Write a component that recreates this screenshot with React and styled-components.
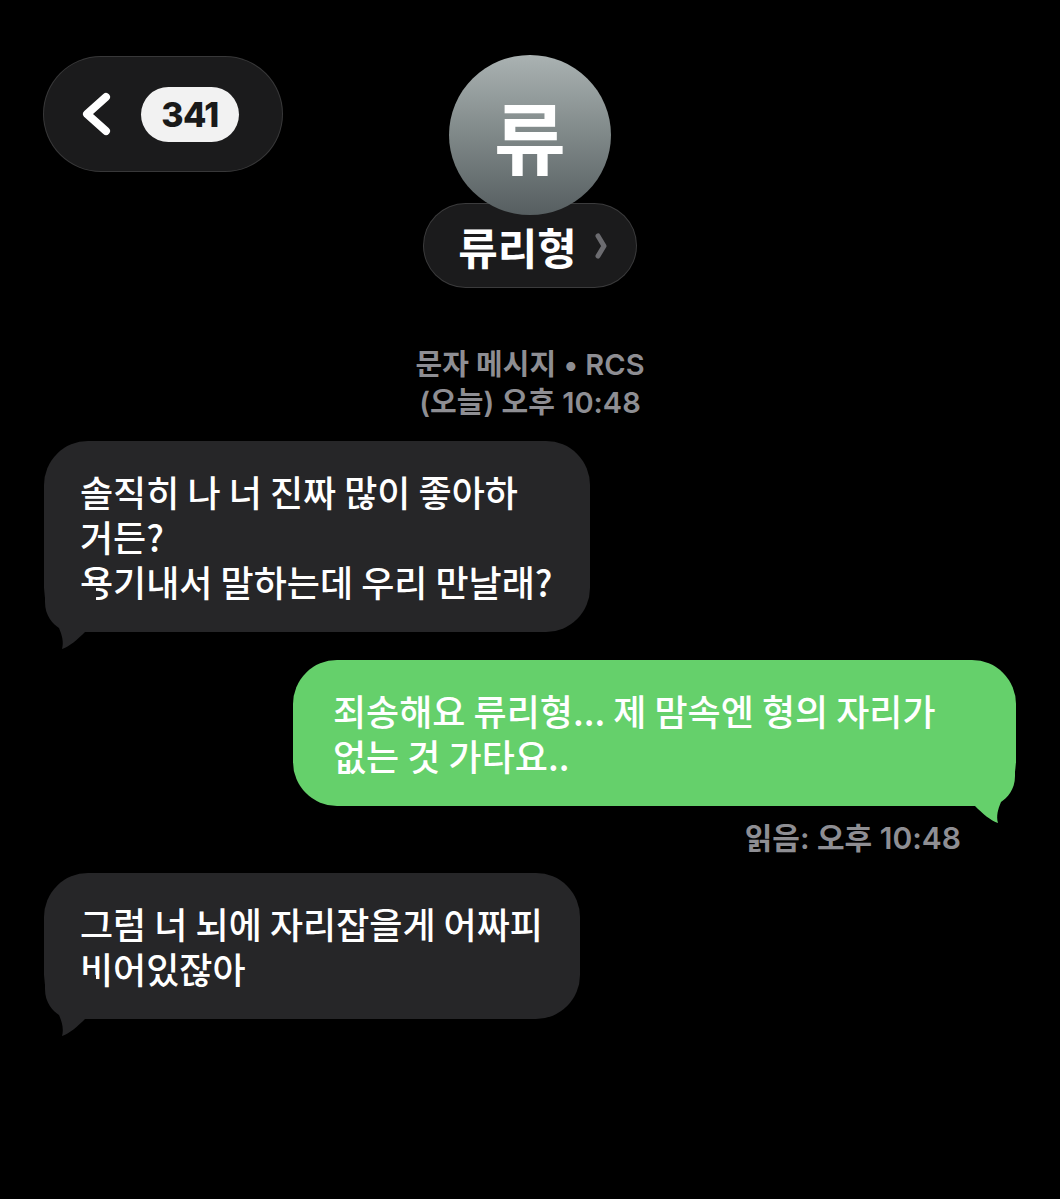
import React from "react";
import styled, { createGlobalStyle } from "styled-components";

const GlobalStyle = createGlobalStyle`
  html, body {
    margin: 0;
    padding: 0;
    background: #000;
  }
  body {
    font-family: "Inter", "Noto Sans CJK KR", sans-serif;
    color: #fff;
  }
`;

const Page = styled.div`
  width: 1060px;
  min-height: 1199px;
  box-sizing: border-box;
  padding: 55px 44px 0;
  background: #000;
`;

const Header = styled.header`
  display: grid;
  grid-template-columns: 1fr auto 1fr;
  align-items: start;
`;

const BackPill = styled.div`
  justify-self: start;
  margin: 1px 0 0 -1px;
  width: 240px;
  height: 116px;
  box-sizing: border-box;
  display: flex;
  align-items: center;
  gap: 30px;
  padding-left: 37px;
  border-radius: 58px;
  background: #1b1b1c;
  border: 1.5px solid rgba(255, 255, 255, 0.13);
`;

const CountBadge = styled.span`
  display: flex;
  align-items: center;
  justify-content: center;
  width: 98px;
  height: 55px;
  border-radius: 28px;
  background: #f2f2f2;
  color: #1a1a1a;
  font-family: "Inter", sans-serif;
  font-size: 34px;
  font-weight: 800;
  letter-spacing: -0.5px;
`;

const Contact = styled.div`
  display: flex;
  flex-direction: column;
  align-items: center;
`;

const Avatar = styled.div`
  position: relative;
  z-index: 1;
  width: 162px;
  height: 160px;
  border-radius: 50%;
  display: flex;
  align-items: center;
  justify-content: center;
  background: linear-gradient(180deg, #aab2b2 0%, #7f8888 50%, #565e60 100%);
  color: #fff;
  font-family: "Noto Sans CJK KR", sans-serif;
  font-size: 78px;
  font-weight: 700;
  line-height: 1;
`;

const NamePill = styled.div`
  margin-top: -12px;
  height: 85px;
  box-sizing: border-box;
  display: flex;
  align-items: center;
  gap: 17px;
  padding: 0 28px 0 34px;
  border-radius: 43px;
  background: #1b1b1c;
  border: 1.5px solid rgba(255, 255, 255, 0.14);
`;

const Name = styled.span`
  font-family: "Noto Sans CJK KR", sans-serif;
  font-size: 43px;
  font-weight: 700;
  color: #fff;
  line-height: 1;
  padding-top: 2px;
`;

const Meta = styled.div`
  margin-top: 58px;
  text-align: center;
  color: #8e8e93;
  font-size: 29px;
  font-weight: 600;
  line-height: 38px;
`;

const Thread = styled.div`
  display: flex;
  flex-direction: column;
  margin-top: 19px;
`;

const Bubble = styled.div`
  position: relative;
  align-self: ${(p) => (p.$out ? "flex-end" : "flex-start")};
  width: ${(p) => (p.$width ? `${p.$width}px` : "auto")};
  box-sizing: border-box;
  margin-top: ${(p) => p.$gap || 0}px;
  padding: 28px 37px 28px ${(p) => (p.$out ? 40 : 36)}px;
  border-radius: 44px;
  background: ${(p) => (p.$out ? "#65d06b" : "#262628")};
  color: #fff;
  font-family: "Noto Sans CJK KR", sans-serif;
  font-size: 36px;
  font-weight: 500;
  line-height: 45px;
  white-space: pre-line;
`;

const Tail = styled.svg`
  position: absolute;
  bottom: -18px;
  ${(p) => (p.$out ? "right: 0; transform: scaleX(-1);" : "left: 0;")}
`;

const Receipt = styled.div`
  align-self: flex-end;
  margin: 13px 55px 0 0;
  color: #8e8e93;
  font-size: 30px;
  font-weight: 600;
  line-height: 38px;
`;

const BubbleTail = ({ out, color }) => (
  <Tail $out={out} width="52" height="62" viewBox="0 0 52 62">
    <path
      d="M1 0 L1 14 C1 28 9 36 15 40 C18 47 20 54 18 61 C25 59 34 51 41 44 L52 44 L52 0 Z"
      fill={color}
    />
  </Tail>
);

const Message = ({ out, width, gap, children }) => (
  <Bubble $out={out} $width={width} $gap={gap}>
    {children}
    <BubbleTail out={out} color={out ? "#65d06b" : "#262628"} />
  </Bubble>
);

export default function App() {
  return (
    <Page>
      <GlobalStyle />
      <Header>
        <BackPill>
          <svg width="30" height="44" viewBox="0 0 30 44">
            <polyline
              points="25,5 6,22 25,39"
              fill="none"
              stroke="#fff"
              strokeWidth="8"
              strokeLinecap="round"
              strokeLinejoin="round"
            />
          </svg>
          <CountBadge>341</CountBadge>
        </BackPill>
        <Contact>
          <Avatar>류</Avatar>
          <NamePill>
            <Name>류리형</Name>
            <svg width="14" height="28" viewBox="0 0 14 28">
              <polyline
                points="4,4 10,14 4,24"
                fill="none"
                stroke="#6c6c70"
                strokeWidth="5"
                strokeLinecap="round"
                strokeLinejoin="round"
              />
            </svg>
          </NamePill>
        </Contact>
        <div />
      </Header>

      <Meta>
        문자 메시지 • RCS
        <br />
        (오늘) 오후 10:48
      </Meta>

      <Thread>
        <Message>{"솔직히 나 너 진짜 많이 좋아하\n거든?\n용기내서 말하는데 우리 만날래?"}</Message>
        <Message out width={723} gap={28}>
          {"죄송해요 류리형... 제 맘속엔 형의 자리가\n없는 것 가타요.."}
        </Message>
        <Receipt>읽음: 오후 10:48</Receipt>
        <Message gap={16}>{"그럼 너 뇌에 자리잡을게 어짜피\n비어있잖아"}</Message>
      </Thread>
    </Page>
  );
}
